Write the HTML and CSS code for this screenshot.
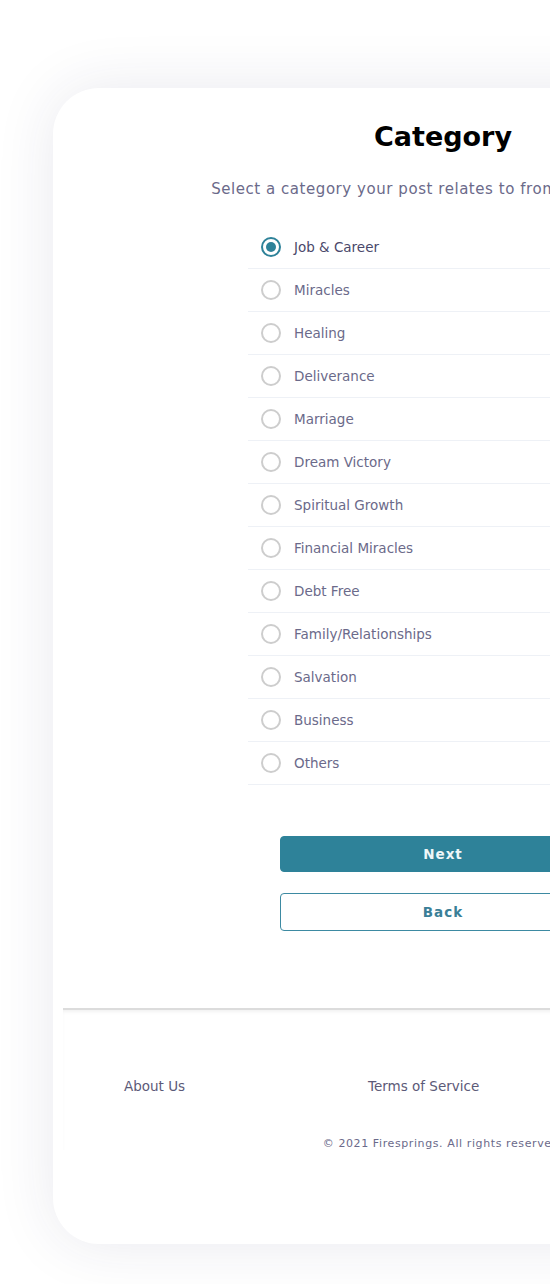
FILE: index.html
```html
<!DOCTYPE html>
<html>
<head>
    <title>Category</title>
    <link rel="stylesheet" href="styles.css">
</head>
<body>
    <div class="page">
        <div class="card">
            <h1 class="title">Category</h1>
            <p class="subtitle">Select a category your post relates to from the list below.</p>

            <form name="categoryForm" class="category-list">
                <label class="option"><input type="radio" name="category" value="job" checked><span>Job &amp; Career</span></label>
                <label class="option"><input type="radio" name="category" value="miracles"><span>Miracles</span></label>
                <label class="option"><input type="radio" name="category" value="healing"><span>Healing</span></label>
                <label class="option"><input type="radio" name="category" value="deliverance"><span>Deliverance</span></label>
                <label class="option"><input type="radio" name="category" value="marriage"><span>Marriage</span></label>
                <label class="option"><input type="radio" name="category" value="dream"><span>Dream Victory</span></label>
                <label class="option"><input type="radio" name="category" value="spiritual"><span>Spiritual Growth</span></label>
                <label class="option"><input type="radio" name="category" value="financial"><span>Financial Miracles</span></label>
                <label class="option"><input type="radio" name="category" value="debt"><span>Debt Free</span></label>
                <label class="option"><input type="radio" name="category" value="family"><span>Family/Relationships</span></label>
                <label class="option"><input type="radio" name="category" value="salvation"><span>Salvation</span></label>
                <label class="option"><input type="radio" name="category" value="business"><span>Business</span></label>
                <label class="option"><input type="radio" name="category" value="others"><span>Others</span></label>
            </form>

            <div class="actions">
                <button type="button" class="btn btn-next">Next</button>
                <button type="button" class="btn btn-back">Back</button>
            </div>

            <div class="footer">
                <div class="footer-links">
                    <a href="#">About Us</a>
                    <a href="#">Terms of Service</a>
                    <a href="#">Privacy Policy</a>
                </div>
                <p class="copyright">&copy; 2021 Firesprings. All rights reserved.</p>
            </div>
        </div>
    </div>
</body>
</html>
```

FILE: styles.css
```css
body {
    margin: 0;
    background-color: #fff;
    font-family: "DejaVu Sans", Verdana, sans-serif;
    color: #5f5d7e;
    overflow: hidden;
}
.page {
    padding: 88px 0 40px 53px;
}
.card {
    width: 780px;
    height: 1156px;
    box-sizing: border-box;
    border-radius: 46px;
    background-color: #fff;
    box-shadow: 0 0 60px rgba(40, 40, 90, 0.1);
    padding-top: 30px;
}
.title {
    margin: 0;
    text-align: center;
    font-size: 27px;
    font-weight: 700;
    color: #000;
    line-height: 38px;
}
.subtitle {
    margin: 23px 0 0;
    text-align: center;
    font-size: 15px;
    letter-spacing: 0.55px;
    line-height: 20px;
    color: #6b6a8a;
}
.category-list {
    width: 390px;
    margin: 27px auto 0;
}
.option {
    display: flex;
    align-items: center;
    gap: 13px;
    height: 42px;
    padding-left: 13px;
    border-bottom: 1px solid #eef1f6;
    font-size: 13.5px;
    color: #6b6a8a;
    cursor: pointer;
}
.option input {
    appearance: none;
    margin: 0;
    width: 20px;
    height: 20px;
    border: 2px solid #cdcdcd;
    border-radius: 50%;
    box-sizing: border-box;
    display: grid;
    place-items: center;
}
.option input:checked {
    border-color: #2e8299;
}
.option input:checked::after {
    content: "";
    width: 10px;
    height: 10px;
    border-radius: 50%;
    background-color: #2e8299;
}
.option input:checked + span {
    color: #4a486a;
}
.actions {
    width: 326px;
    margin: 51px auto 0;
    display: flex;
    flex-direction: column;
    gap: 21px;
}
.btn {
    height: 36px;
    border-radius: 4px;
    font-family: inherit;
    font-size: 13.5px;
    font-weight: 700;
    letter-spacing: 1px;
    cursor: pointer;
}
.btn-next {
    background-color: #2e8299;
    border: 1px solid #2e8299;
    color: #eef6f8;
}
.btn-back {
    height: 38px;
    background-color: #fff;
    border: 1px solid #3d8aa2;
    color: #3b7f97;
}
.footer {
    margin: 77px 10px 0;
    border-top: 2px solid #dcdcdc;
    box-shadow: inset 0 3px 4px -2px rgba(0, 0, 0, 0.08);
}
.footer-links {
    display: grid;
    grid-template-columns: 244px 244px auto;
    padding: 68px 0 0 61px;
}
.footer-links a {
    font-size: 13.5px;
    color: #5c5a78;
    text-decoration: none;
}
.copyright {
    margin: 43px 0 0;
    text-align: center;
    font-size: 11px;
    letter-spacing: 0.6px;
    color: #6b6a8a;
}
```
